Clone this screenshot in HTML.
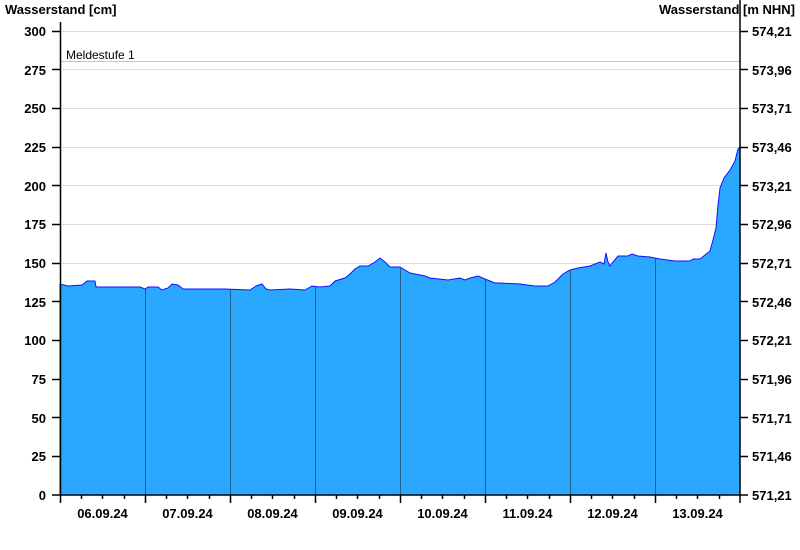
<!DOCTYPE html>
<html><head><style>
body{margin:0;background:#fff}
svg{display:block}
text{font-family:"Liberation Sans",sans-serif;font-size:13px;font-weight:bold;fill:#000}
</style></head><body>
<svg width="800" height="550" viewBox="0 0 800 550">
<defs><clipPath id="c"><polygon id="pp" points="60,495 60,284 68,286 82,285 87,281 95,281 96,287 140,287 145,289 148,287 158,287 162,290 168,288 172,284 178,285 183,289 225,289 250,290 256,286 262,284 266,289 270,290 290,289 305,290 312,286 320,287 330,286 335,281 345,278 350,274 355,269 360,266 368,266 375,262 380,258 385,262 390,267 400,267 405,270 410,273 425,276 430,278 448,280 460,278 465,280 470,278 478,276 485,279 495,283 500,283 520,284 535,286 548,286 555,282 563,274 570,270 578,268 590,266 600,262 604,264 606,253 608,262 610,266 613,262 618,256 628,256 632,254 638,256 650,257 660,259 675,261 690,261 693,259 700,259 705,255 710,251 713,240 716,228 718,205 720,188 724,178 730,170 735,161 738,149 740,147 740,495"/></clipPath></defs>
<g stroke="#dcdcdc" stroke-width="1">
<line x1="60" x2="740" y1="31.5" y2="31.5"/><line x1="60" x2="740" y1="69.5" y2="69.5"/><line x1="60" x2="740" y1="108.5" y2="108.5"/><line x1="60" x2="740" y1="147.5" y2="147.5"/><line x1="60" x2="740" y1="185.5" y2="185.5"/><line x1="60" x2="740" y1="224.5" y2="224.5"/><line x1="60" x2="740" y1="263.5" y2="263.5"/><line x1="60" x2="740" y1="301.5" y2="301.5"/>
</g>
<line x1="60" x2="740" y1="61.5" y2="61.5" stroke="#f0c850"/>
<text x="66" y="59" style="font-weight:normal;font-size:12px">Meldestufe 1</text>
<polygon points="60,495 60,284 68,286 82,285 87,281 95,281 96,287 140,287 145,289 148,287 158,287 162,290 168,288 172,284 178,285 183,289 225,289 250,290 256,286 262,284 266,289 270,290 290,289 305,290 312,286 320,287 330,286 335,281 345,278 350,274 355,269 360,266 368,266 375,262 380,258 385,262 390,267 400,267 405,270 410,273 425,276 430,278 448,280 460,278 465,280 470,278 478,276 485,279 495,283 500,283 520,284 535,286 548,286 555,282 563,274 570,270 578,268 590,266 600,262 604,264 606,253 608,262 610,266 613,262 618,256 628,256 632,254 638,256 650,257 660,259 675,261 690,261 693,259 700,259 705,255 710,251 713,240 716,228 718,205 720,188 724,178 730,170 735,161 738,149 740,147 740,495" fill="#2aa8ff" stroke="#1010ff" stroke-width="1"/>
<g clip-path="url(#c)" stroke="#1f5f8a" stroke-width="1">
<line x1="145.5" x2="145.5" y1="0" y2="495"/><line x1="230.5" x2="230.5" y1="0" y2="495"/><line x1="315.5" x2="315.5" y1="0" y2="495"/><line x1="400.5" x2="400.5" y1="0" y2="495"/><line x1="485.5" x2="485.5" y1="0" y2="495"/><line x1="570.5" x2="570.5" y1="0" y2="495"/><line x1="655.5" x2="655.5" y1="0" y2="495"/>
</g>
<g stroke="#000" stroke-width="1.5">
<line x1="60.5" x2="60.5" y1="22" y2="496"/><line x1="740" x2="740" y1="0" y2="496"/><line x1="52" x2="740" y1="495" y2="495"/>
<line x1="52" x2="60" y1="31.5" y2="31.5"/><line x1="52" x2="60" y1="69.5" y2="69.5"/><line x1="52" x2="60" y1="108.5" y2="108.5"/><line x1="52" x2="60" y1="147.5" y2="147.5"/><line x1="52" x2="60" y1="185.5" y2="185.5"/><line x1="52" x2="60" y1="224.5" y2="224.5"/><line x1="52" x2="60" y1="263.5" y2="263.5"/><line x1="52" x2="60" y1="301.5" y2="301.5"/><line x1="52" x2="60" y1="340.5" y2="340.5"/><line x1="52" x2="60" y1="379.5" y2="379.5"/><line x1="52" x2="60" y1="417.5" y2="417.5"/><line x1="52" x2="60" y1="456.5" y2="456.5"/>
<line x1="740" x2="748" y1="31.5" y2="31.5"/><line x1="740" x2="748" y1="69.5" y2="69.5"/><line x1="740" x2="748" y1="108.5" y2="108.5"/><line x1="740" x2="748" y1="147.5" y2="147.5"/><line x1="740" x2="748" y1="185.5" y2="185.5"/><line x1="740" x2="748" y1="224.5" y2="224.5"/><line x1="740" x2="748" y1="263.5" y2="263.5"/><line x1="740" x2="748" y1="301.5" y2="301.5"/><line x1="740" x2="748" y1="340.5" y2="340.5"/><line x1="740" x2="748" y1="379.5" y2="379.5"/><line x1="740" x2="748" y1="417.5" y2="417.5"/><line x1="740" x2="748" y1="456.5" y2="456.5"/><line x1="740" x2="748" y1="495" y2="495"/>
</g>
<g stroke="#000" stroke-width="1.5">
<path d="M60.5 495v8M145.5 495v8M230.5 495v8M315.5 495v8M400.5 495v8M485.5 495v8M570.5 495v8M655.5 495v8M740 495v8"/>
<path d="M81.5 495v4M102.5 495v4M124.5 495v4M166.5 495v4M187.5 495v4M209.5 495v4M251.5 495v4M272.5 495v4M294.5 495v4M336.5 495v4M357.5 495v4M379.5 495v4M421.5 495v4M442.5 495v4M464.5 495v4M506.5 495v4M527.5 495v4M549.5 495v4M591.5 495v4M612.5 495v4M634.5 495v4M676.5 495v4M697.5 495v4M719.5 495v4"/>
</g>
<text x="5" y="14">Wasserstand [cm]</text>
<text x="795" y="14" text-anchor="end">Wasserstand [m NHN]</text>
<g text-anchor="end">
<text x="46" y="36">300</text><text x="46" y="75">275</text><text x="46" y="113">250</text><text x="46" y="152">225</text><text x="46" y="191">200</text><text x="46" y="229">175</text><text x="46" y="268">150</text><text x="46" y="307">125</text><text x="46" y="345">100</text><text x="46" y="384">75</text><text x="46" y="423">50</text><text x="46" y="461">25</text><text x="46" y="500">0</text>
</g>
<g>
<text x="752" y="36">574,21</text><text x="752" y="75">573,96</text><text x="752" y="113">573,71</text><text x="752" y="152">573,46</text><text x="752" y="191">573,21</text><text x="752" y="229">572,96</text><text x="752" y="268">572,71</text><text x="752" y="307">572,46</text><text x="752" y="345">572,21</text><text x="752" y="384">571,96</text><text x="752" y="423">571,71</text><text x="752" y="461">571,46</text><text x="752" y="500">571,21</text>
</g>
<g text-anchor="middle">
<text x="102.5" y="518">06.09.24</text><text x="187.5" y="518">07.09.24</text><text x="272.5" y="518">08.09.24</text><text x="357.5" y="518">09.09.24</text><text x="442.5" y="518">10.09.24</text><text x="527.5" y="518">11.09.24</text><text x="612.5" y="518">12.09.24</text><text x="697.5" y="518">13.09.24</text>
</g>
</svg>
</body></html>
